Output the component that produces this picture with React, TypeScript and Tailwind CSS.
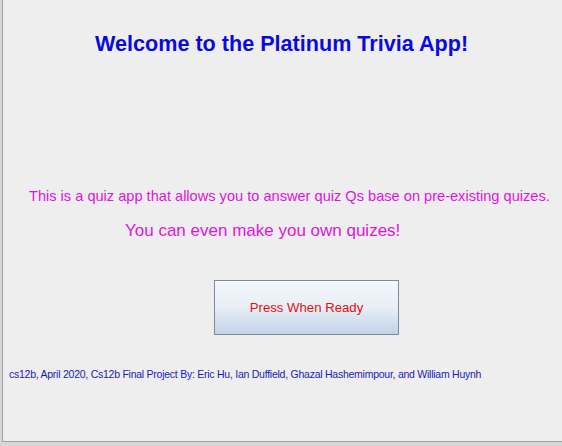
import React from "react";

export default function App() {
  return (
    <div className="w-[562px] h-[446px] bg-[#d6d6d6] flex flex-col overflow-hidden" style={{ fontFamily: '"Liberation Sans", Arial, sans-serif' }}>
      <div className="ml-[2px] h-[442px] bg-[#eeeeee] border-l border-b border-[#a0a0a0] flex flex-col">
        <div className="ml-[92px] mt-[31px] text-[21.6px] leading-[26px] font-bold text-[#0a0ae0] whitespace-nowrap">
          Welcome to the Platinum Trivia App!
        </div>
        <div className="ml-[26px] mt-[131px] text-[14.6px] leading-[17px] text-[#e014e0] whitespace-nowrap">
          This is a quiz app that allows you to answer quiz Qs base on pre-existing quizes.
        </div>
        <div className="ml-[122px] mt-[16px] text-[17px] leading-[20px] text-[#e014e0] whitespace-nowrap">
          You can even make you own quizes!
        </div>
        <button className="ml-[211px] mt-[39px] w-[185px] h-[55px] border border-[#7a8a9c] bg-gradient-to-b from-[#f4f8fc] via-[#e8eef6] to-[#c0d4e8] text-[13.2px] text-[#e01010] flex items-center justify-center">
          Press When Ready
        </button>
        <div className="ml-[6px] mt-[33px] text-[10.5px] tracking-[-0.25px] leading-[12px] text-[#1a1ab8] whitespace-nowrap">
          cs12b, April 2020, Cs12b Final Project By: Eric Hu, Ian Duffield, Ghazal Hashemimpour, and William Huynh
        </div>
      </div>
    </div>
  );
}
